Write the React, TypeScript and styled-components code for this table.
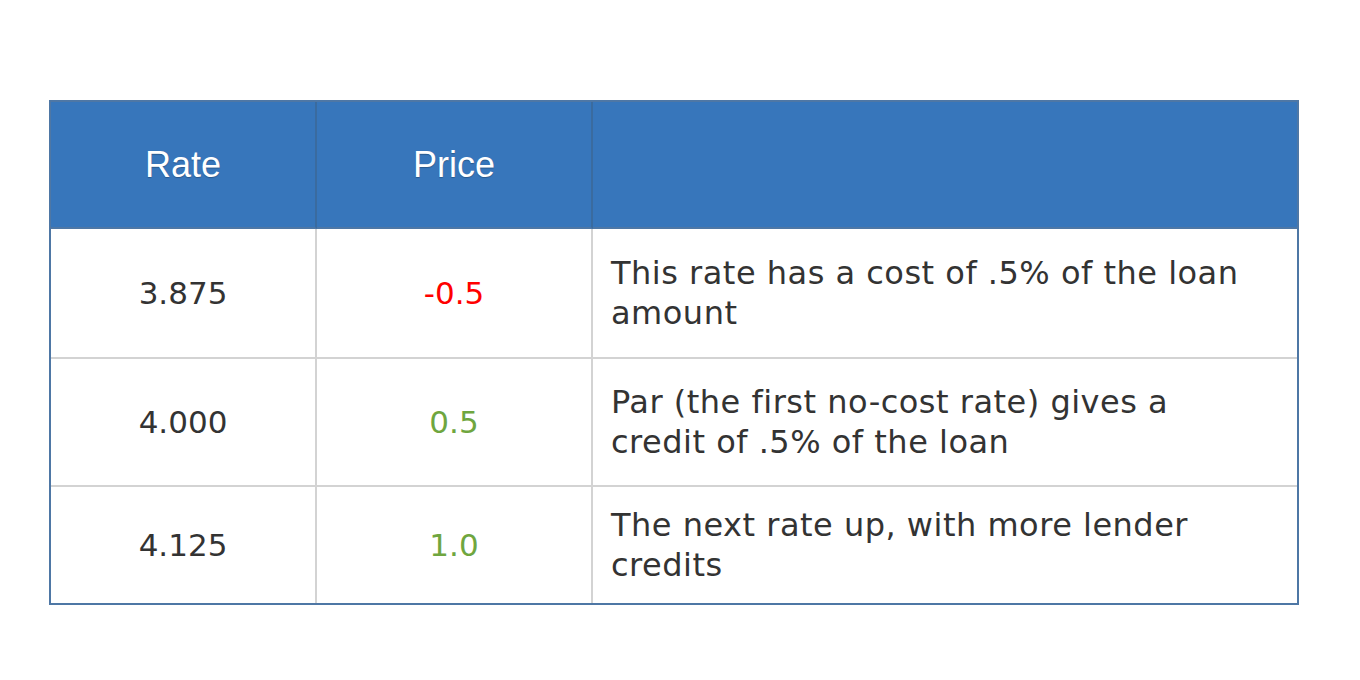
import React from "react";
import styled, { createGlobalStyle } from "styled-components";

const Global = createGlobalStyle`
  html, body { margin: 0; padding: 0; background: #ffffff; }
`;

const Page = styled.div`
  padding: 100px 0 0 49px;
  width: 1360px;
  height: 680px;
  box-sizing: border-box;
`;

const Table = styled.table`
  width: 1250px;
  border-collapse: separate;
  border-spacing: 0;
  border: 2px solid #4e77a5;
  table-layout: fixed;
`;

const HeadCell = styled.th<{ $last?: boolean }>`
  height: 127px;
  padding: 0;
  background: #3776bb;
  color: #ffffff;
  font-family: "Liberation Sans", Arial, sans-serif;
  font-weight: 400;
  font-size: 36px;
  text-align: center;
  text-shadow: 0 1px 1px rgba(0, 0, 0, 0.25);
  border-right: ${(p) => (p.$last ? "none" : "2px solid #3a6b9f")};
  border-bottom: 2px solid #4e77a5;
  box-sizing: border-box;
`;

const Cell = styled.td<{ $h: number; $color?: string; $desc?: boolean; $lastRow?: boolean }>`
  height: ${(p) => p.$h}px;
  padding: ${(p) => (p.$desc ? "0 30px 0 18px" : "0")};
  font-family: "DejaVu Sans", "Open Sans", sans-serif;
  font-weight: 400;
  font-size: ${(p) => (p.$desc ? "32px" : "31px")};
  letter-spacing: ${(p) => (p.$desc ? "0.5px" : "0")};
  line-height: 40px;
  color: ${(p) => p.$color ?? "#333333"};
  text-align: ${(p) => (p.$desc ? "left" : "center")};
  border-right: ${(p) => (p.$desc ? "none" : "2px solid #d3d3d3")};
  border-bottom: ${(p) => (p.$lastRow ? "none" : "2px solid #d3d3d3")};
  box-sizing: border-box;
  vertical-align: middle;
`;

const rows = [
  { rate: "3.875", price: "-0.5", color: "#ff0000", desc: "This rate has a cost of .5% of the loan amount", h: 130 },
  { rate: "4.000", price: "0.5", color: "#6fa63f", desc: "Par (the first no-cost rate) gives a credit of .5% of the loan", h: 128 },
  { rate: "4.125", price: "1.0", color: "#6fa63f", desc: "The next rate up, with more lender credits", h: 116 },
];

export default function App() {
  return (
    <Page>
      <Global />
      <Table>
        <colgroup>
          <col style={{ width: "266px" }} />
          <col style={{ width: "276px" }} />
          <col />
        </colgroup>
        <thead>
          <tr>
            <HeadCell>Rate</HeadCell>
            <HeadCell>Price</HeadCell>
            <HeadCell $last />
          </tr>
        </thead>
        <tbody>
          {rows.map((r, i) => (
            <tr key={r.rate}>
              <Cell $h={r.h} $lastRow={i === rows.length - 1}>{r.rate}</Cell>
              <Cell $h={r.h} $color={r.color} $lastRow={i === rows.length - 1}>{r.price}</Cell>
              <Cell $h={r.h} $desc $lastRow={i === rows.length - 1}>{r.desc}</Cell>
            </tr>
          ))}
        </tbody>
      </Table>
    </Page>
  );
}
